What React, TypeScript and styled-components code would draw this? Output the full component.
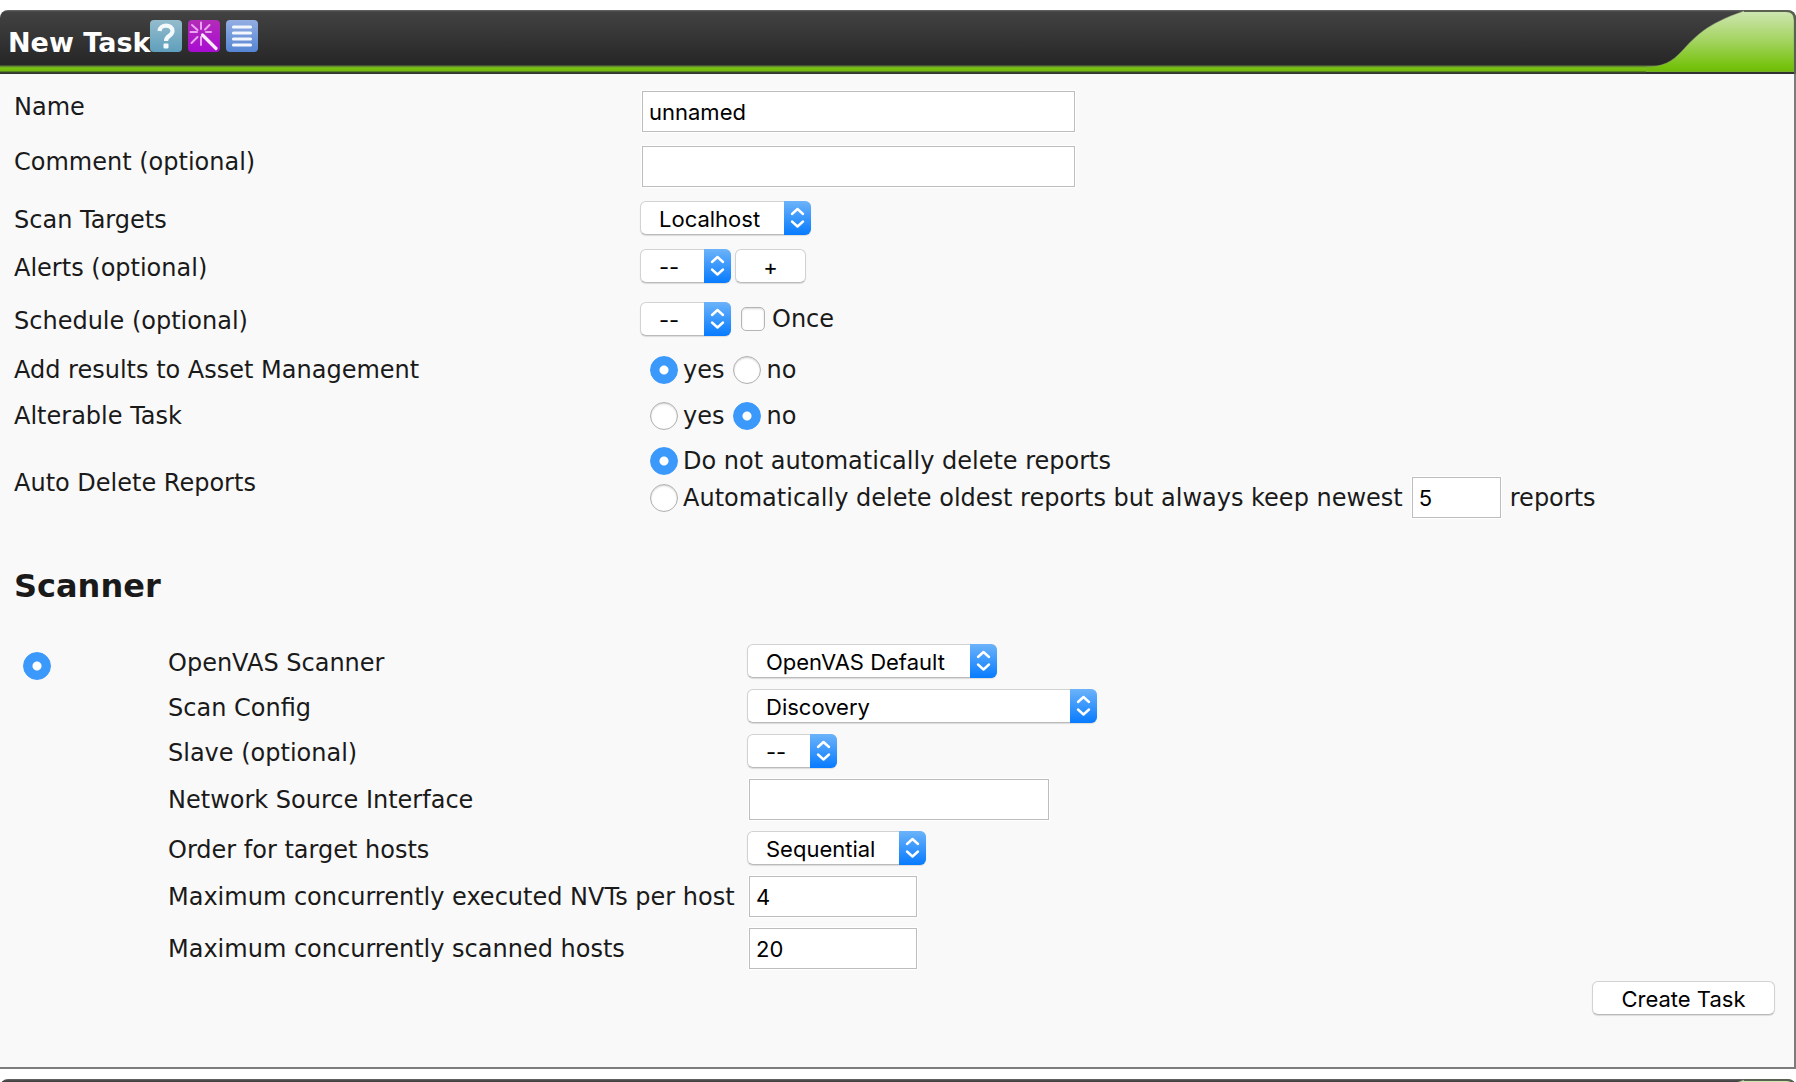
import React, { useId, useState } from 'react';
import styled, { createGlobalStyle, css } from 'styled-components';

const GlobalStyle = createGlobalStyle`
  *, *::before, *::after { box-sizing: border-box; }
  body {
    margin: 0;
    background: #fff;
    color: #1a1a1a;
    font: 24px/30px Verdana, "DejaVu Sans", sans-serif;
  }
`;

const controlFont = css`
  font: 22px/30px Inter, "Liberation Sans", sans-serif;
  color: #000;
`;

const Page = styled.div`
  display: flex;
  flex-direction: column;
  min-height: 100vh;
  padding-top: 10px;
`;

const Header = styled.header`
  display: flex;
  align-items: flex-start;
  height: 64px;
  flex: none;
  padding-left: 8px;
  overflow: hidden;
  border-radius: 8px 8px 0 0;
  background: linear-gradient(
    #686868 0, #424242 2px, #262626 55px, #5c7a3c 56px,
    #7ac412 58px, #70b80c 61px, #3c4a30 62px, #303030 64px
  );
`;

const Title = styled.h1`
  margin: 16px 0 0;
  font-size: 27px;
  line-height: 34px;
  font-weight: bold;
  color: #fff;
  white-space: nowrap;
`;

const IconBar = styled.nav`
  display: flex;
  gap: 6px;
  margin-top: 10px;
`;

const IconLink = styled.a`
  display: block;
  width: 32px;
  height: 32px;
`;

const Swoosh = styled.svg`
  display: block;
  flex: none;
  margin-left: auto;
`;

const Panel = styled.main`
  background: #f9f9f9;
  border: solid #7d7d7d;
  border-width: 0 2px 2px 0;
`;

const Form = styled.form`
  display: flex;
  flex-direction: column;
  padding: 17px 19px 52px 14px;
`;

const Row = styled.div<{ $align?: string; $gap?: number }>`
  display: flex;
  align-items: ${(p) => p.$align ?? 'center'};
  margin-top: ${(p) => p.$gap ?? 0}px;
`;

const labelText = css<{ $width: number }>`
  flex: 0 0 ${(p) => p.$width}px;
  white-space: nowrap;
`;

const Label = styled.label<{ $width: number }>`${labelText}`;
const GroupLabel = styled.span<{ $width: number }>`${labelText}`;
const TopLabel = styled(Label)`
  line-height: 32px;
`;

const TextInput = styled.input<{ $width: number }>`
  ${controlFont}
  width: ${(p) => p.$width}px;
  height: 41px;
  margin: 0 2px;
  padding: 0 6px;
  border: 1px solid #bdbdbd;
  border-radius: 0;
  background: #fff;
  box-shadow: 0 0 0 1px #fff;
  outline: none;
`;

const raised = css`
  height: 34px;
  border: 1px solid #d2d2d2;
  border-bottom-color: #bababa;
  border-radius: 6px;
  background: #fff;
  box-shadow: 0 1px 1px rgba(0, 0, 0, 0.12);
`;

const Button = styled.button<{ $width: number }>`
  ${controlFont}
  ${raised}
  width: ${(p) => p.$width}px;
  padding: 2px 0 0;
`;

const SelectBox = styled.span<{ $width: number }>`
  position: relative;
  display: block;
  flex: none;
  width: ${(p) => p.$width}px;
  height: 34px;
`;

const NativeSelect = styled.select`
  ${controlFont}
  ${raised}
  display: block;
  width: 100%;
  padding: 2px 27px 0 18px;
  appearance: none;
  outline: none;
`;

const Stepper = styled.svg`
  position: absolute;
  top: 0;
  right: 0;
  pointer-events: none;
  border-radius: 0 6px 6px 0;
  background: linear-gradient(#6cb3fa, #077bff);
`;

const Checkbox = styled.input`
  appearance: none;
  width: 24px;
  height: 24px;
  margin: 0;
  border: 1px solid #b5b5b5;
  border-radius: 5px;
  background: #fff;
  box-shadow: inset 0 1px 2px rgba(0, 0, 0, 0.16);
  &:checked { background: #3b99fc; }
`;

const Radio = styled.input`
  appearance: none;
  flex: none;
  width: 28px;
  height: 28px;
  margin: 0;
  border: 1px solid #b0b0b0;
  border-radius: 50%;
  background: #fff;
  box-shadow: inset 0 1px 2px rgba(0, 0, 0, 0.18);
  &:checked {
    border-color: #3b99fc;
    background: radial-gradient(circle, #fff 0 4px, #3b99fc 5px);
    box-shadow: none;
  }
`;

const Choice = styled.label<{ $gap?: number }>`
  display: flex;
  align-items: center;
  gap: ${(p) => p.$gap ?? 5}px;
  height: 28px;
  white-space: nowrap;
`;

const Choices = styled.div<{ $column?: boolean }>`
  display: flex;
  flex-direction: ${(p) => (p.$column ? 'column' : 'row')};
  gap: ${(p) => (p.$column ? 2 : 9)}px;
  padding-left: 10px;
`;

const Inline = styled.div<{ $gap: number }>`
  display: flex;
  align-items: center;
  gap: ${(p) => p.$gap}px;
`;

const SectionTitle = styled.h2`
  margin: 48px 0 38px;
  font-size: 32px;
  line-height: 40px;
  font-weight: bold;
`;

const ScannerSection = styled.section`
  display: flex;
  align-items: flex-start;
  padding-left: 9px;
`;

const ScannerPick = styled.div`
  flex: 0 0 145px;
  padding-top: 8px;
  line-height: 0;
`;

const ScannerFields = styled.div`
  display: flex;
  flex-direction: column;
  gap: 11px;
`;

const Actions = styled.div`
  display: flex;
  justify-content: flex-end;
  margin-top: 12px;
`;

const NextPanel = styled.div`
  flex: 1 0 3px;
  height: 0;
  margin-top: 10px;
  overflow: hidden;
`;

function PanelHeader({ children }: { children?: React.ReactNode }) {
  const id = useId();
  return (
    <Header>
      {children}
      <Swoosh width="150" height="64" viewBox="0 0 150 64" aria-hidden="true">
        <defs>
          <linearGradient id={id} x1="0" y1="0" x2="0" y2="1">
            <stop offset="0" stopColor="#cfe6b2" />
            <stop offset="0.5" stopColor="#a2d35e" />
            <stop offset="0.92" stopColor="#75c20c" />
            <stop offset="1" stopColor="#70b80c" />
          </linearGradient>
        </defs>
        <path
          d="M0 57 C16 57 26 52 36 41 C50 26 60 14 98 1 H142 Q148 2 148 10 V62 H0 Z"
          fill={`url(#${id})`}
          stroke="#8a9a78"
          strokeWidth="1"
          strokeOpacity="0.5"
        />
        <path d="M0 63 H150" stroke="#303030" strokeWidth="2" />
        <path d="M98 1 H140 Q149 1 149 10 V64" fill="none" stroke="#5a6150" strokeWidth="2" />
      </Swoosh>
    </Header>
  );
}

function HelpIcon() {
  return (
    <svg width="32" height="32" viewBox="0 0 32 32" aria-hidden="true">
      <defs>
        <linearGradient id="help" x1="0" y1="0" x2="0" y2="1">
          <stop offset="0" stopColor="#94bccd" />
          <stop offset="1" stopColor="#5f9fbd" />
        </linearGradient>
      </defs>
      <rect width="32" height="32" rx="4" fill="url(#help)" />
      <path d="M9.5 11 C10 3.500 22.500 4 22.500 11 C22.500 16 16 15.500 16 21" fill="none" stroke="#f4f9fb" strokeWidth="4.200" />
      <rect x="13.500" y="23.500" width="5" height="5" rx="1" fill="#f4f9fb" />
    </svg>
  );
}

function WizardIcon() {
  return (
    <svg width="32" height="32" viewBox="0 0 32 32" aria-hidden="true">
      <defs>
        <linearGradient id="wizard" x1="0" y1="0" x2="0" y2="1">
          <stop offset="0" stopColor="#b32cb8" />
          <stop offset="1" stopColor="#a80cd2" />
        </linearGradient>
      </defs>
      <rect width="32" height="32" rx="4" fill="url(#wizard)" />
      <g stroke="#e9a6ec" strokeWidth="2" strokeLinecap="round">
        <path d="M13 2.500 V9 M4 5 L9.500 10 M21.500 5 L17 9.500 M2.500 12 H9 M18 12 H23 M3.500 23 L9.500 17 M13 17 V25" />
      </g>
      <path d="M14.500 15 L28 28.500" stroke="#fbeafc" strokeWidth="3.200" strokeLinecap="round" />
    </svg>
  );
}

function ListIcon() {
  return (
    <svg width="32" height="32" viewBox="0 0 32 32" aria-hidden="true">
      <defs>
        <linearGradient id="list" x1="0" y1="0" x2="0" y2="1">
          <stop offset="0" stopColor="#93aee2" />
          <stop offset="1" stopColor="#5585d4" />
        </linearGradient>
      </defs>
      <rect width="32" height="32" rx="4" fill="url(#list)" />
      <path d="M7.500 7 H24.500 M7.500 13 H24.500 M7.500 19 H24.500 M7.500 25 H24.500" stroke="#f3f6fc" strokeWidth="3.200" strokeLinecap="round" />
    </svg>
  );
}

function Select({ id, width, options }: { id: string; width: number; options: string[] }) {
  return (
    <SelectBox $width={width}>
      <NativeSelect id={id} defaultValue={options[0]}>
        {options.map((o) => <option key={o}>{o}</option>)}
      </NativeSelect>
      <Stepper width="27" height="34" viewBox="0 0 27 34" aria-hidden="true">
        <path
          d="M8 13 L13.500 8 L19 13 M8 20.500 L13.500 25.500 L19 20.500"
          fill="none" stroke="#fff" strokeWidth="2.400" strokeLinecap="round" strokeLinejoin="round"
        />
      </Stepper>
    </SelectBox>
  );
}

function YesNo({ name, initial, label }: { name: string; initial: 'yes' | 'no'; label: string }) {
  const [value, setValue] = useState<string>(initial);
  return (
    <Choices role="radiogroup" aria-label={label}>
      {['yes', 'no'].map((v) => (
        <Choice key={v}>
          <Radio type="radio" name={name} checked={value === v} onChange={() => setValue(v)} />
          {v}
        </Choice>
      ))}
    </Choices>
  );
}

const MAIN = 626;
const SUB = 579;

export default function App() {
  return (
    <>
      <GlobalStyle />
      <Page>
        <PanelHeader>
          <Title>New Task</Title>
          <IconBar>
            <IconLink href="#help" aria-label="Help"><HelpIcon /></IconLink>
            <IconLink href="#wizard" aria-label="Task wizard"><WizardIcon /></IconLink>
            <IconLink href="#tasks" aria-label="Tasks"><ListIcon /></IconLink>
          </IconBar>
        </PanelHeader>
        <Panel>
          <Form onSubmit={(e) => e.preventDefault()}>
            <Row $align="flex-start">
              <TopLabel $width={MAIN} htmlFor="name">Name</TopLabel>
              <TextInput id="name" $width={433} defaultValue="unnamed" />
            </Row>
            <Row $align="flex-start" $gap={14}>
              <TopLabel $width={MAIN} htmlFor="comment">Comment (optional)</TopLabel>
              <TextInput id="comment" $width={433} />
            </Row>
            <Row $align="flex-end" $gap={14}>
              <Label $width={MAIN} htmlFor="target">Scan Targets</Label>
              <Select id="target" width={171} options={['Localhost']} />
            </Row>
            <Row $align="flex-end" $gap={14}>
              <Label $width={MAIN} htmlFor="alert">Alerts (optional)</Label>
              <Inline $gap={4}>
                <Select id="alert" width={91} options={['--']} />
                <Button type="button" $width={71} aria-label="Add alert">+</Button>
              </Inline>
            </Row>
            <Row $align="flex-end" $gap={19}>
              <Label $width={MAIN} htmlFor="schedule">Schedule (optional)</Label>
              <Inline $gap={10}>
                <Select id="schedule" width={91} options={['--']} />
                <Choice $gap={7}><Checkbox type="checkbox" />Once</Choice>
              </Inline>
            </Row>
            <Row $gap={19}>
              <GroupLabel $width={MAIN}>Add results to Asset Management</GroupLabel>
              <YesNo name="assets" initial="yes" label="Add results to Asset Management" />
            </Row>
            <Row $gap={16}>
              <GroupLabel $width={MAIN}>Alterable Task</GroupLabel>
              <YesNo name="alterable" initial="no" label="Alterable Task" />
            </Row>
            <Row $gap={16}>
              <GroupLabel $width={MAIN}>Auto Delete Reports</GroupLabel>
              <Choices $column role="radiogroup" aria-label="Auto Delete Reports">
                <Choice>
                  <Radio type="radio" name="autodelete" defaultChecked />
                  Do not automatically delete reports
                </Choice>
                <Inline $gap={7}>
                  <Choice>
                    <Radio type="radio" name="autodelete" />
                    Automatically delete oldest reports but always keep newest
                  </Choice>
                  <TextInput $width={89} defaultValue="5" aria-label="Reports to keep" />
                  <span>reports</span>
                </Inline>
              </Choices>
            </Row>
            <SectionTitle>Scanner</SectionTitle>
            <ScannerSection>
              <ScannerPick>
                <Radio type="radio" name="scanner" defaultChecked aria-label="OpenVAS Scanner" />
              </ScannerPick>
              <ScannerFields>
                <Row $align="flex-end">
                  <Label $width={SUB} htmlFor="scanner">OpenVAS Scanner</Label>
                  <Select id="scanner" width={250} options={['OpenVAS Default']} />
                </Row>
                <Row $align="flex-end">
                  <Label $width={SUB} htmlFor="config">Scan Config</Label>
                  <Select id="config" width={350} options={['Discovery']} />
                </Row>
                <Row $align="flex-end">
                  <Label $width={SUB} htmlFor="slave">Slave (optional)</Label>
                  <Select id="slave" width={90} options={['--']} />
                </Row>
                <Row>
                  <Label $width={SUB} htmlFor="iface">Network Source Interface</Label>
                  <TextInput id="iface" $width={300} />
                </Row>
                <Row $align="flex-end">
                  <Label $width={SUB} htmlFor="order">Order for target hosts</Label>
                  <Select id="order" width={179} options={['Sequential']} />
                </Row>
                <Row>
                  <Label $width={SUB} htmlFor="nvts">Maximum concurrently executed NVTs per host</Label>
                  <TextInput id="nvts" $width={168} defaultValue="4" />
                </Row>
                <Row>
                  <Label $width={SUB} htmlFor="hosts">Maximum concurrently scanned hosts</Label>
                  <TextInput id="hosts" $width={168} defaultValue="20" />
                </Row>
              </ScannerFields>
            </ScannerSection>
            <Actions>
              <Button type="submit" $width={183}>Create Task</Button>
            </Actions>
          </Form>
        </Panel>
        <NextPanel><PanelHeader /></NextPanel>
      </Page>
    </>
  );
}
